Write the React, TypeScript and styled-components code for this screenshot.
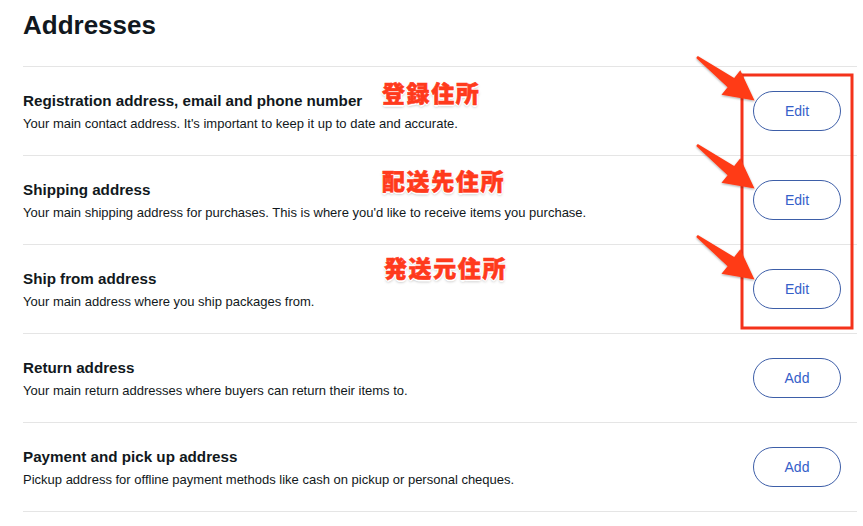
import React from 'react';
import styled, { createGlobalStyle } from 'styled-components';

const GlobalStyle = createGlobalStyle`
  html, body {
    margin: 0;
    padding: 0;
    background: #ffffff;
  }
  body {
    font-family: "Liberation Sans", Arial, Helvetica, sans-serif;
    color: #111820;
  }
`;

const addressList = [
  {
    title: 'Registration address, email and phone number',
    text: "Your main contact address. It's important to keep it up to date and accurate.",
    action: 'Edit',
  },
  {
    title: 'Shipping address',
    text: "Your main shipping address for purchases. This is where you'd like to receive items you purchase.",
    action: 'Edit',
  },
  {
    title: 'Ship from address',
    text: 'Your main address where you ship packages from.',
    action: 'Edit',
  },
  {
    title: 'Return address',
    text: 'Your main return addresses where buyers can return their items to.',
    action: 'Add',
  },
  {
    title: 'Payment and pick up address',
    text: 'Pickup address for offline payment methods like cash on pickup or personal cheques.',
    action: 'Add',
  },
];

// annotation labels drawn over the screenshot
const noteList = [
  { text: '登録住所', x: 382, y: 81 },
  { text: '配送先住所', x: 382, y: 169 },
  { text: '発送元住所', x: 384, y: 256 },
];

const arrowOffsets = [0, 88, 179];

export default function App() {
  return (
    <>
      <GlobalStyle />
      <Page>
        <Heading>Addresses</Heading>
        <List>
          {addressList.map((item) => {
            return (
              <Row key={item.title}>
                <Info>
                  <Title>{item.title}</Title>
                  <Description>{item.text}</Description>
                </Info>
                <ActionButton>{item.action}</ActionButton>
              </Row>
            );
          })}
        </List>

        <Overlay>
          <svg width="863" height="526" viewBox="0 0 863 526">
            <defs>
              <filter id="arrowShadow" x="-20%" y="-20%" width="140%" height="140%">
                <feDropShadow dx="0" dy="1" stdDeviation="1.2" floodColor="#000" floodOpacity="0.35" />
              </filter>
            </defs>
            <rect x="742" y="75" width="110" height="253" fill="none" stroke="#f4321b" strokeWidth="3" />
            {arrowOffsets.map((dy) => (
              <polygon
                key={dy}
                transform={`translate(0 ${dy})`}
                filter="url(#arrowShadow)"
                fill="#ff3a17"
                points="696.2,58 727.6,87.2 721.5,94.8 754.5,100.5 740.3,70.3 734.2,78 697.8,56"
              />
            ))}
          </svg>
          {noteList.map((note) => (
            <Note key={note.text} style={{ left: note.x, top: note.y }}>
              {note.text}
            </Note>
          ))}
        </Overlay>
      </Page>
    </>
  );
}

const Page = styled.div`
  position: relative;
  width: 863px;
  height: 526px;
  box-sizing: border-box;
  padding: 10px 6px 0 23px;
  overflow: hidden;
`;

const Heading = styled.h1`
  margin: 0 0 25px 0;
  font-size: 26px;
  line-height: 31px;
  font-weight: 700;
  color: #111820;
`;

const List = styled.div`
  display: flex;
  flex-direction: column;
`;

const Row = styled.div`
  display: flex;
  align-items: center;
  justify-content: space-between;
  border-top: 1px solid #e5e5e5;
  padding: 24px 16px 22px 0;
  &:last-child {
    border-bottom: 1px solid #e5e5e5;
  }
`;

const Info = styled.div`
  display: flex;
  flex-direction: column;
  gap: 4px;
`;

const Title = styled.div`
  font-size: 15.2px;
  line-height: 20px;
  font-weight: 700;
`;

const Description = styled.div`
  font-size: 13px;
  line-height: 18px;
`;

const ActionButton = styled.button`
  width: 88px;
  height: 40px;
  margin-top: -2px;
  border: 1px solid #3d5ea8;
  border-radius: 20px;
  background: #ffffff;
  color: #3560c9;
  font-family: "Liberation Sans", Arial, sans-serif;
  font-size: 14px;
  padding: 0;
`;

const Overlay = styled.div`
  position: absolute;
  inset: 0;
  pointer-events: none;
  svg {
    position: absolute;
    left: 0;
    top: 0;
  }
`;

const Note = styled.div`
  position: absolute;
  font-family: "Noto Sans CJK JP", "Noto Sans", sans-serif;
  font-size: 23px;
  line-height: 23px;
  font-weight: 900;
  letter-spacing: 1.6px;
  color: #ff3a1c;
  white-space: nowrap;
  -webkit-text-stroke: 0.6px #ff3a1c;
  text-shadow:
    1.5px 0 0 #fff, -1.5px 0 0 #fff, 0 1.5px 0 #fff, 0 -1.5px 0 #fff,
    1px 1px 0 #fff, -1px 1px 0 #fff, 1px -1px 0 #fff, -1px -1px 0 #fff,
    0 2px 3px rgba(0, 0, 0, 0.35);
`;
